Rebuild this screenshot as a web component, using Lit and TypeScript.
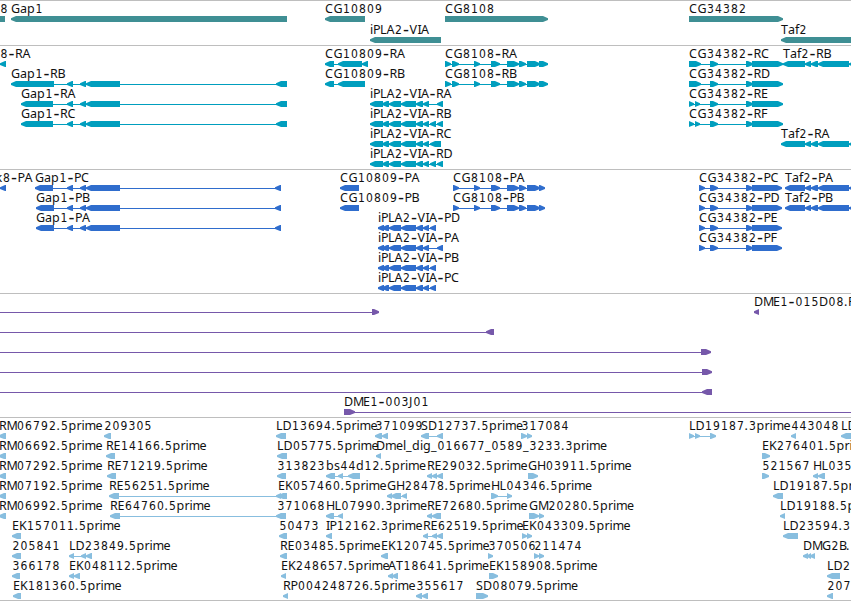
import { LitElement, html, svg, css } from 'lit';
import { customElement, property } from 'lit/decorators.js';
import { classMap } from 'lit/directives/class-map.js';

type Span = [number, number];

interface Feature {
  label: string;
  x: number;
  dir: 'L' | 'R' | '-';
  blocks: Span[];
  // thin line, when it reaches further than the blocks
  line?: Span;
}

interface Track {
  kind: string;
  rowHeight: number;
  rows: Feature[][];
}

const BAR_TOP = 15;
const BAR_HEIGHT = 6;
const HEAD = 5;

const ADVANCE: Record<string, number> = {
  A: 8, B: 7, C: 8.5, D: 9, E: 7, F: 7, G: 9, H: 8.5, I: 3.5, J: 4, K: 7.5, L: 6.5,
  M: 10, P: 7, R: 7.5, S: 7, T: 7, V: 8, a: 7, b: 8, d: 8, e: 7, f: 4, g: 8, i: 3,
  k: 7, l: 3, m: 11, p: 8, r: 5, s: 6, _: 6, '-': 7, '.': 4,
};

const f = (label: string, x: number, dir: Feature['dir'], blocks: Span[], line?: Span): Feature =>
  ({ label, x, dir, blocks, line });

const gapTail: Span[] = [[67, 73], [80, 86], [86, 120]];
const cg8108: Span[] = [[474, 480], [491, 500], [507, 519], [519, 526], [527, 540]];
const cg8108R: Span[] = [[445, 451], [452, 459], ...cg8108, [539, 548]];
const cg8108P: Span[] = [[453, 459], ...cg8108, [539, 545]];
const ipla: Span[] = [[382, 389], [389, 401], [401, 416], [416, 423], [423, 429]];
const iplaR: Span[] = [[370, 383], ...ipla];
const iplaP: Span[] = [[378, 384], ...ipla];
const cg34382: Span[] = [[710, 718], [746, 753]];
const cg34382R: Span[] = [...cg34382, [752, 783]];
const cg34382P: Span[] = [...cg34382, [752, 782]];
const taf2: Span[] = [[805, 811], [811, 818], [818, 849], [849, 856]];

const TRACKS: Track[] = [
  {
    kind: 'gene',
    rowHeight: 21,
    rows: [
      [
        f('8', 0, '-', [[-5, 5]]),
        f('Gap1', 11, 'L', [[11, 287]]),
        f('CG10809', 325, 'L', [[325, 365]]),
        f('CG8108', 445, 'R', [[445, 548]]),
        f('CG34382', 689, 'R', [[689, 783]]),
      ],
      [
        f('iPLA2-VIA', 370, 'L', [[370, 441]]),
        f('Taf2', 781, 'L', [[781, 860]]),
      ],
    ],
  },
  {
    kind: 'transcript',
    rowHeight: 20,
    rows: [
      [
        f('8-RA', 0, 'L', [[0, 6]]),
        f('CG10809-RA', 325, 'L', [[325, 334], [338, 362], [362, 368]]),
        f('CG8108-RA', 445, 'R', cg8108R),
        f('CG34382-RC', 689, 'R', [[689, 701], ...cg34382R]),
        f('Taf2-RB', 783, 'L', [[783, 805], ...taf2]),
      ],
      [
        f('Gap1-RB', 11, 'L', [[11, 54], ...gapTail, [276, 287]]),
        f('CG10809-RB', 325, 'L', [[325, 334], [338, 365]]),
        f('CG8108-RB', 445, 'R', cg8108R),
        f('CG34382-RD', 689, 'R', [[689, 701], ...cg34382R]),
      ],
      [
        f('Gap1-RA', 21, 'L', [[21, 53], ...gapTail, [276, 287]]),
        f('iPLA2-VIA-RA', 370, 'L', [...iplaR, [437, 443]]),
        f('CG34382-RE', 689, 'R', [[689, 694], [695, 700], ...cg34382R]),
      ],
      [
        f('Gap1-RC', 21, 'L', [[21, 53], ...gapTail, [276, 287]]),
        f('iPLA2-VIA-RB', 370, 'L', [...iplaR, [430, 436], [437, 443]]),
        f('CG34382-RF', 689, 'R', [[689, 694], [695, 700], ...cg34382R]),
      ],
      [
        f('iPLA2-VIA-RC', 370, 'L', [...iplaR, [430, 441]]),
        f('Taf2-RA', 781, 'L', [[781, 805], ...taf2]),
      ],
      [f('iPLA2-VIA-RD', 370, 'L', [...iplaR, [430, 436], [437, 443]])],
    ],
  },
  {
    kind: 'cds',
    rowHeight: 20,
    rows: [
      [
        f('k8-PA', -4.5, 'L', [[0, 6]]),
        f('Gap1-PC', 35, 'L', [[35, 53], ...gapTail, [275, 281]]),
        f('CG10809-PA', 340, 'L', [[340, 359]]),
        f('CG8108-PA', 453, 'R', cg8108P),
        f('CG34382-PC', 699, 'R', [[699, 705], ...cg34382P]),
        f('Taf2-PA', 785, 'L', [[785, 805], ...taf2]),
      ],
      [
        f('Gap1-PB', 36, 'L', [[36, 54], ...gapTail, [275, 281]]),
        f('CG10809-PB', 340, 'L', [[340, 359]]),
        f('CG8108-PB', 453, 'R', cg8108P),
        f('CG34382-PD', 699, 'R', [[699, 705], ...cg34382P]),
        f('Taf2-PB', 785, 'L', [[785, 805], ...taf2]),
      ],
      [
        f('Gap1-PA', 36, 'L', [[36, 54], ...gapTail, [275, 281]]),
        f('iPLA2-VIA-PD', 378, 'L', [...iplaP, [430, 436]]),
        f('CG34382-PE', 699, 'R', [[699, 705], ...cg34382P]),
      ],
      [
        f('iPLA2-VIA-PA', 378, 'L', [...iplaP, [437, 443]]),
        f('CG34382-PF', 699, 'R', [[699, 705], ...cg34382P]),
      ],
      [f('iPLA2-VIA-PB', 378, 'L', [...iplaP, [430, 436]])],
      [f('iPLA2-VIA-PC', 378, 'L', [...iplaP, [430, 436]])],
    ],
  },
  {
    kind: 'clone',
    rowHeight: 20,
    rows: [
      [
        f('', 0, 'R', [[372, 379]], [-5, 373]),
        f('DME1-015D08.F', 754, 'L', [[754, 759]]),
      ],
      [f('', 0, 'L', [[486, 494]], [-5, 488])],
      [f('', 0, 'R', [[701, 711]], [-5, 703])],
      [f('', 0, 'R', [[702, 712]], [-5, 703])],
      [f('', 0, 'L', [[702, 712]], [-5, 704])],
      [f('DME1-003J01', 344, 'R', [[344, 355]], [350, 860])],
    ],
  },
  {
    kind: 'est',
    rowHeight: 20,
    rows: [
      [
        f('RM06792.5prime', -1, 'L', [[-1, 6]]),
        f('209305', 104, 'L', [[104, 111]]),
        f('LD13694.5prime', 276, 'L', [[276, 286]]),
        f('371099', 375, 'L', [[375, 382], [382, 388]]),
        f('SD12737.5prime', 421, 'L', [[421, 429], [437, 443]]),
        f('317084', 521, 'R', [[521, 527], [527, 532]]),
        f('LD19187.3prime', 689, 'R', [[689, 694], [695, 700], [710, 716]]),
        f('443048', 791, 'L', [[791, 796]]),
        f('LD', 841, 'L', [[841, 855]]),
      ],
      [
        f('RM06692.5prime', -1, 'L', [[-1, 6]]),
        f('RE14166.5prime', 106, 'L', [[106, 115]]),
        f('LD05775.5prime', 277, 'L', [[277, 287]]),
        f('Dmel_dig_016677_0589_3233.3prime', 376, 'L', [[376, 381]]),
        f('EK276401.5prime', 762, 'R', [[762, 770]]),
      ],
      [
        f('RM07292.5prime', -1, 'L', [[-1, 6]]),
        f('RE71219.5prime', 107, 'L', [[107, 116]]),
        f('313823', 277, 'L', [[277, 286]]),
        f('bs44d12.5prime', 326, 'L', [[326, 335], [338, 343], [348, 360]]),
        f('RE29032.5prime', 427, 'L', [[427, 432], [432, 437], [437, 443]]),
        f('GH03911.5prime', 528, 'R', [[528, 538]]),
        f('521567', 762, 'R', [[762, 769]]),
        f('HL035', 813, 'L', [[813, 818], [818, 825]]),
      ],
      [
        f('RM07192.5prime', -1, 'L', [[-1, 6]]),
        f('RE56251.5prime', 109, 'L', [[109, 119], [276, 281]]),
        f('EK057460.5prime', 278, 'L', [[278, 287]]),
        f('GH28478.5prime', 387, 'L', [[387, 392], [391, 401], [402, 407]]),
        f('HL04346.5prime', 491, 'R', [[491, 498], [507, 512]]),
        f('LD19187.5prime', 773, 'L', [[773, 783]]),
      ],
      [
        f('RM06992.5prime', -1, 'L', [[-1, 6]]),
        f('RE64760.5prime', 110, 'L', [[110, 120], [276, 286]]),
        f('371068', 277, 'L', [[277, 286]]),
        f('HL07990.3prime', 326, 'L', [[326, 334], [338, 343]]),
        f('RE72680.5prime', 427, 'L', [[427, 432], [432, 441]]),
        f('GM20280.5prime', 529, 'R', [[529, 539], [539, 544]]),
        f('LD19188.5prime', 780, 'L', [[780, 785]]),
      ],
      [
        f('EK157011.5prime', 12, 'L', [[12, 21]]),
        f('50473', 279, 'L', [[279, 287]]),
        f('IP12162.3prime', 326, 'L', [[326, 332]]),
        f('RE62519.5prime', 423, 'L', [[423, 428], [432, 437], [437, 443]]),
        f('EK043309.5prime', 522, 'R', [[522, 527], [527, 532]]),
        f('LD23594.3', 783, 'L', [[783, 798]]),
      ],
      [
        f('205841', 12, 'L', [[12, 21]]),
        f('LD23849.5prime', 69, 'L', [[69, 74], [81, 86], [86, 92]]),
        f('RE03485.5prime', 280, 'L', [[280, 287]]),
        f('EK120745.5prime', 381, 'L', [[381, 388]]),
        f('370506', 488, 'R', [[488, 493]]),
        f('211474', 534, 'R', [[534, 539], [539, 544]]),
        f('DMG2B.', 803, 'L', [[803, 808], [807, 811], [810, 815]]),
      ],
      [
        f('366178', 12, 'L', [[12, 20]]),
        f('EK048112.5prime', 69, 'L', [[69, 74], [74, 80]]),
        f('EK248657.5prime', 281, 'L', [[281, 286]]),
        f('AT18641.5prime', 388, 'L', [[388, 393], [392, 398]]),
        f('EK158908.5prime', 489, 'R', [[489, 498]]),
        f('LD2', 827, 'L', [[827, 840]]),
      ],
      [
        f('EK181360.5prime', 13, 'L', [[13, 21]]),
        f('RP004248726.5prime', 283, 'L', [[283, 288]]),
        f('355617', 416, 'L', [[416, 422], [422, 428]]),
        f('SD08079.5prime', 476, 'R', [[476, 488]]),
        f('207', 827, 'L', [[827, 833]]),
      ],
    ],
  },
];

@customElement('feature-row')
export class FeatureRow extends LitElement {
  @property({ attribute: false }) features: Feature[] = [];
  @property({ type: Number }) height = 20;

  static styles = css`
    :host {
      display: block;
    }

    .row {
      display: block;
      width: 100%;
      overflow: visible;
    }

    .label {
      font-family: 'Noto Sans', 'Open Sans', sans-serif;
      font-size: 12.5px;
      fill: #111;
    }

    .digits {
      font-family: 'DejaVu Sans Condensed', 'DejaVu Sans', sans-serif;
      font-stretch: condensed;
      font-size: 12px;
    }

    .dash {
      font-family: 'Liberation Sans', sans-serif;
      font-size: 18px;
    }

    .shape {
      fill: currentColor;
    }
  `;

  render() {
    return html`
      <svg class="row" height=${this.height}>
        ${this.features.map((feature) => this._feature(feature))}
      </svg>
    `;
  }

  _feature(feature: Feature) {
    const { blocks, dir } = feature;
    const [from, to] = feature.line ?? [blocks[0][0] + 2, blocks[blocks.length - 1][1] - 2];

    return svg`
      <rect class="shape" x=${from} y=${BAR_TOP + 3} width=${to - from} height="1"></rect>
      ${blocks.map((b) => svg`<polygon class="shape" points=${this._points(b, dir)}></polygon>`)}
      ${feature.label ? this._label(feature) : ''}
    `;
  }

  _points([a, b]: Span, dir: Feature['dir']) {
    const top = BAR_TOP;
    const mid = BAR_TOP + BAR_HEIGHT / 2;
    const bottom = BAR_TOP + BAR_HEIGHT;
    const head = Math.min(HEAD, b - a);

    // the tips are blunt, two pixels high
    if (dir === 'L') {
      return `${a},${mid - 0.7} ${a + head},${top} ${b},${top} ${b},${bottom} ${a + head},${bottom} ${a},${mid + 1}`;
    }
    if (dir === 'R') {
      return `${b},${mid - 0.7} ${b - head},${top} ${a},${top} ${a},${bottom} ${b - head},${bottom} ${b},${mid + 1}`;
    }
    return `${a},${top} ${b},${top} ${b},${bottom} ${a},${bottom}`;
  }

  _label({ label, x }: Feature) {
    const runs = label.match(/[0-9]+|-|[^0-9-]+/g) ?? [];
    let at = x;

    return svg`<text class="label">${runs.map((run) => {
      const dash = run === '-';
      const digits = /^[0-9]/.test(run);
      const xs = [...run].map((char) => {
        const start = at;
        at += ADVANCE[char] ?? 8;
        return digits || dash ? start + 0.5 : start;
      });
      return svg`<tspan class=${classMap({ dash, digits })} x=${xs.join(' ')} y=${dash ? 14 : 12}>${run}</tspan>`;
    })}</text>`;
  }
}

@customElement('app-root')
export class AppRoot extends LitElement {
  static styles = css`
    :host {
      display: block;
      width: 851px;
      height: 601px;
      overflow: hidden;
      background: #fff;
    }

    .browser {
      display: flex;
      flex-direction: column;
      border-bottom: 1px solid #bebebe;
    }

    .track {
      border-top: 1px solid #bebebe;
      padding-bottom: 3px;
    }

    .gene {
      color: #3f8f94;
      padding-bottom: 2px;
    }

    .transcript {
      color: #009ebe;
    }

    .cds {
      color: #2f6dcd;
    }

    .clone {
      color: #7658aa;
    }

    .est {
      color: #88bedf;
      padding-bottom: 2px;
    }
  `;

  render() {
    return html`
      <div class="browser">
        ${TRACKS.map(
          (track) => html`
            <div class="track ${track.kind}">
              ${track.rows.map(
                (row) => html`<feature-row .features=${row} .height=${track.rowHeight}></feature-row>`
              )}
            </div>
          `
        )}
      </div>
    `;
  }
}
